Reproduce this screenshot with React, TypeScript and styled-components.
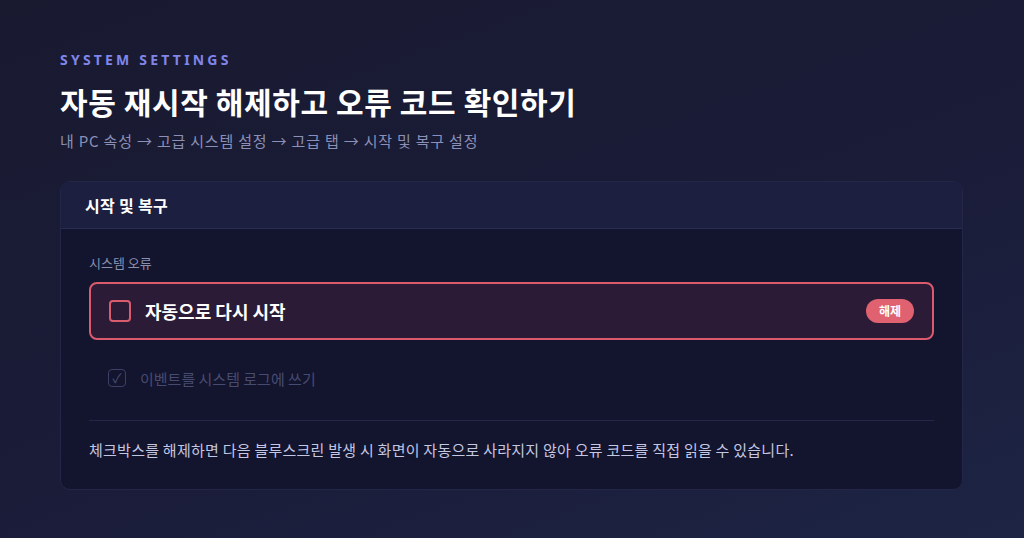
import React from "react";
import styled, { createGlobalStyle } from "styled-components";

const GlobalStyle = createGlobalStyle`
  html, body {
    margin: 0;
    padding: 0;
    height: 100%;
  }
  body {
    background: linear-gradient(160deg, #191a30 0%, #1a1c38 55%, #1d2444 100%);
    font-family: "Noto Sans", "Noto Sans CJK KR", sans-serif;
    color: #ffffff;
  }
`;

const Page = styled.div`
  box-sizing: border-box;
  width: 1024px;
  height: 538px;
  padding: 51px 61px 0 60px;
  display: flex;
  flex-direction: column;
`;

const Eyebrow = styled.div`
  font-family: "Noto Sans", sans-serif;
  font-size: 14px;
  font-weight: 700;
  letter-spacing: 3.2px;
  color: #8086e8;
  line-height: 18px;
`;

const Title = styled.h1`
  margin: 14px 0 0;
  font-family: "Noto Sans CJK KR", sans-serif;
  font-size: 30px;
  font-weight: 700;
  letter-spacing: 0.6px;
  line-height: 36px;
  color: #ffffff;
`;

const Breadcrumb = styled.div`
  margin-top: 12px;
  font-family: "Noto Sans CJK KR", sans-serif;
  font-size: 15px;
  letter-spacing: 0.8px;
  line-height: 20px;
  color: #8a90b8;
`;

const Card = styled.section`
  margin-top: 30px;
  border: 1px solid #232647;
  border-radius: 10px;
  background: #13142d;
  overflow: hidden;
`;

const CardHeader = styled.div`
  padding: 13px 24px;
  background: #1c1f40;
  border-bottom: 1px solid #2a2d52;
  font-family: "Noto Sans CJK KR", sans-serif;
  font-size: 16px;
  font-weight: 700;
  letter-spacing: 0.3px;
  line-height: 20px;
  color: #ffffff;
`;

const CardBody = styled.div`
  padding: 25px 28px 29px;
  display: flex;
  flex-direction: column;
`;

const GroupLabel = styled.div`
  font-family: "Noto Sans CJK KR", sans-serif;
  font-size: 13px;
  line-height: 18px;
  color: #8a8fb0;
`;

const OptionRow = styled.div<{ $active?: boolean }>`
  display: flex;
  align-items: center;
  gap: 14px;
  box-sizing: border-box;
  margin-top: ${(p) => (p.$active ? "10px" : "20px")};
  padding: ${(p) => (p.$active ? "0 18px 0 18px" : "0 17px")};
  height: ${(p) => (p.$active ? "58px" : "36px")};
  border-radius: 8px;
  border: 2px solid ${(p) => (p.$active ? "#db5b6d" : "transparent")};
  background: ${(p) => (p.$active ? "#2b1b36" : "transparent")};
`;

const Box = styled.span<{ $active?: boolean }>`
  box-sizing: border-box;
  flex: none;
  display: flex;
  align-items: center;
  justify-content: center;
  width: ${(p) => (p.$active ? "22px" : "18px")};
  height: ${(p) => (p.$active ? "22px" : "18px")};
  border-radius: 4px;
  border: ${(p) => (p.$active ? "2px solid #d95c6c" : "1.5px solid #3c4066")};
  color: #4a4f76;
  font-size: 13px;
  line-height: 1;
`;

const OptionText = styled.span<{ $active?: boolean }>`
  flex: 1;
  font-family: "Noto Sans CJK KR", sans-serif;
  font-size: ${(p) => (p.$active ? "18px" : "15px")};
  font-weight: ${(p) => (p.$active ? 700 : 400)};
  color: ${(p) => (p.$active ? "#ffffff" : "#474b70")};
`;

const Pill = styled.span`
  padding: 3px 13px;
  border-radius: 12px;
  background: #e0616f;
  font-family: "Noto Sans CJK KR", sans-serif;
  font-size: 12px;
  font-weight: 700;
  line-height: 18px;
  color: #ffffff;
`;

const Divider = styled.hr`
  margin: 24px 0 0;
  border: 0;
  border-top: 1px solid #24274a;
`;

const Note = styled.p`
  margin: 19px 0 0;
  font-family: "Noto Sans CJK KR", sans-serif;
  font-size: 15px;
  letter-spacing: 0.25px;
  line-height: 20px;
  color: #c3c7e2;
`;

export default function App() {
  return (
    <>
      <GlobalStyle />
      <Page>
        <Eyebrow>SYSTEM SETTINGS</Eyebrow>
        <Title>자동 재시작 해제하고 오류 코드 확인하기</Title>
        <Breadcrumb>내 PC 속성 → 고급 시스템 설정 → 고급 탭 → 시작 및 복구 설정</Breadcrumb>
        <Card>
          <CardHeader>시작 및 복구</CardHeader>
          <CardBody>
            <GroupLabel>시스템 오류</GroupLabel>
            <OptionRow $active>
              <Box $active />
              <OptionText $active>자동으로 다시 시작</OptionText>
              <Pill>해제</Pill>
            </OptionRow>
            <OptionRow>
              <Box>✓</Box>
              <OptionText>이벤트를 시스템 로그에 쓰기</OptionText>
            </OptionRow>
            <Divider />
            <Note>
              체크박스를 해제하면 다음 블루스크린 발생 시 화면이 자동으로 사라지지 않아 오류 코드를 직접 읽을 수 있습니다.
            </Note>
          </CardBody>
        </Card>
      </Page>
    </>
  );
}
